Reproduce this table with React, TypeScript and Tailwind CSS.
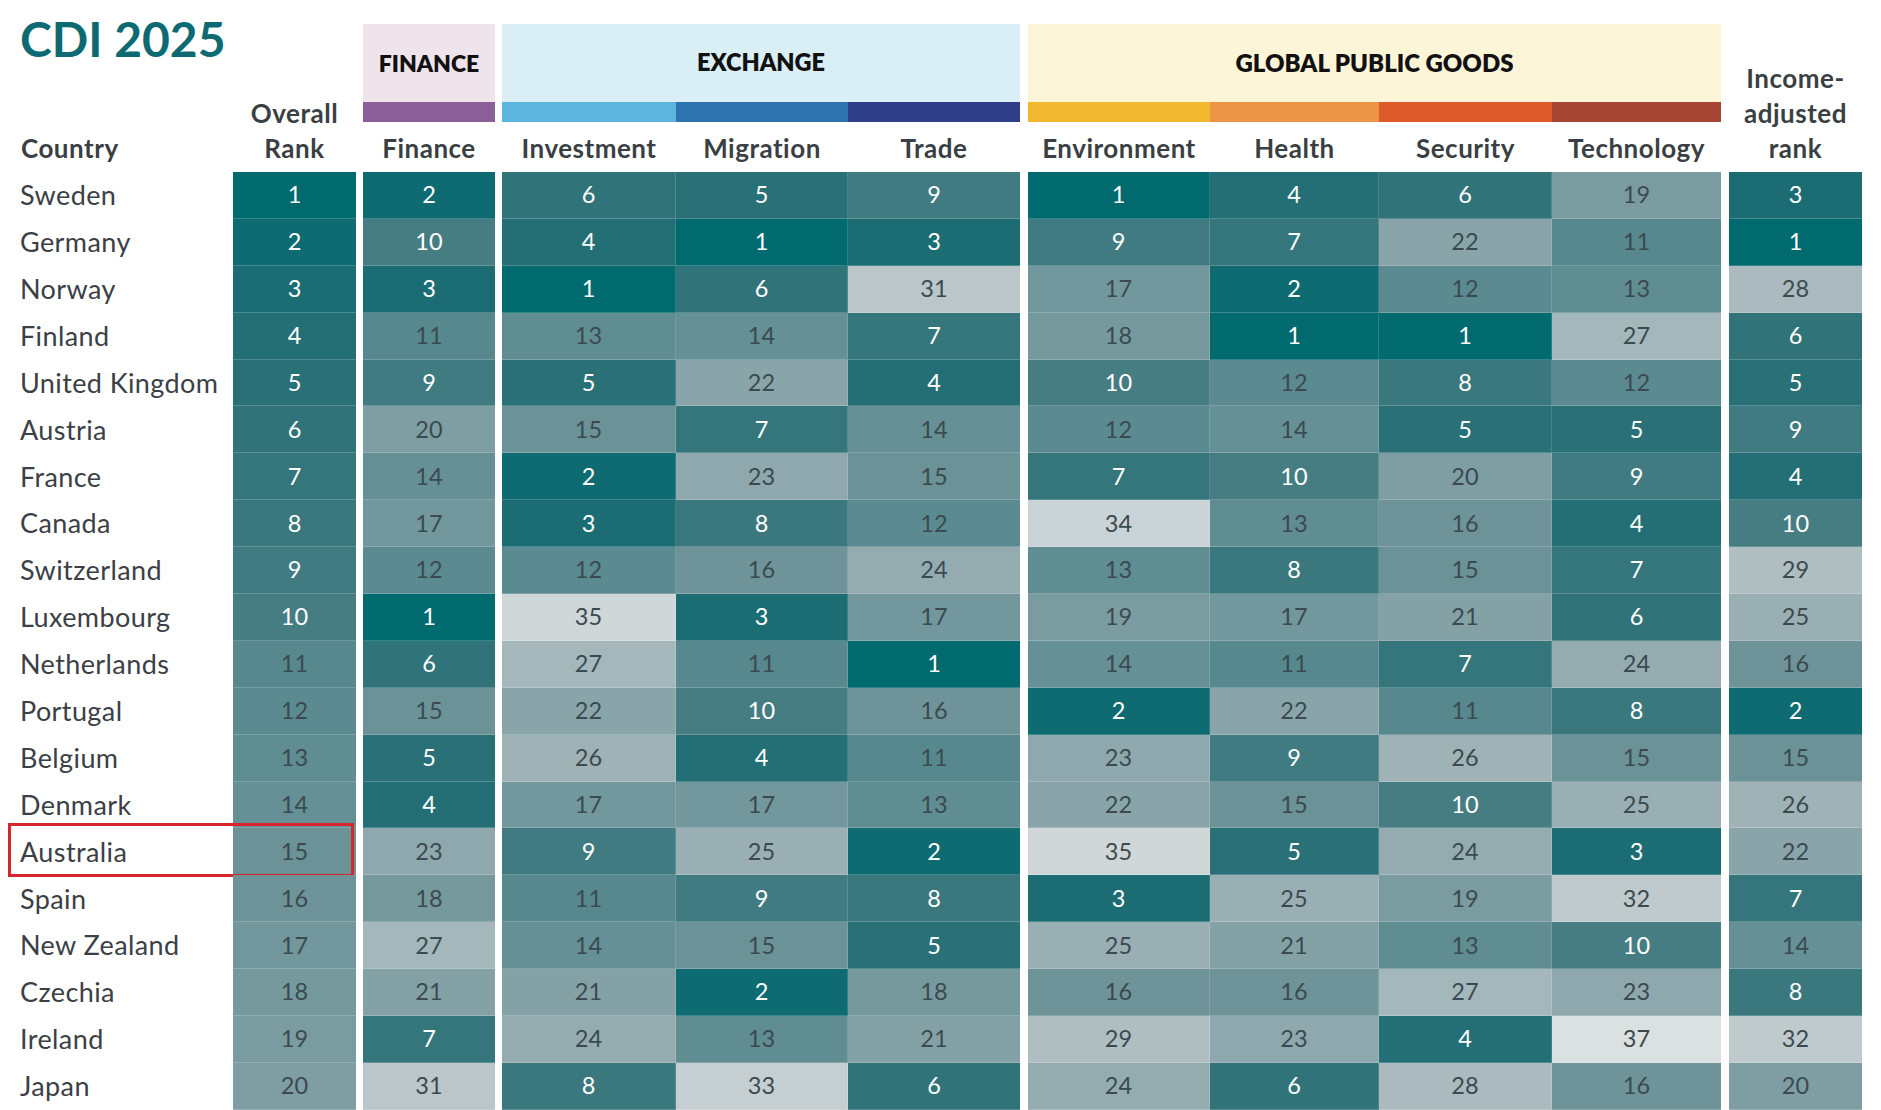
import React from "react";

type RGB = [number, number, number];
const stops: [number, RGB][] = [
  [1, [0, 106, 111]],
  [3, [28, 108, 115]],
  [5, [42, 113, 119]],
  [10, [70, 125, 131]],
  [11, [86, 136, 141]],
  [15, [106, 146, 151]],
  [20, [126, 158, 163]],
  [25, [154, 175, 179]],
  [30, [180, 194, 197]],
  [35, [208, 215, 217]],
  [38, [224, 228, 229]],
];

function colorFor(r: number): string {
  for (let i = 0; i < stops.length - 1; i++) {
    const [a, ca] = stops[i];
    const [b, cb] = stops[i + 1];
    if (r >= a && r <= b) {
      const t = (r - a) / (b - a);
      const c = ca.map((v, k) => Math.round(v + (cb[k] - v) * t));
      return `rgb(${c[0]},${c[1]},${c[2]})`;
    }
  }
  return "rgb(224,228,229)";
}

const data: [string, number[]][] = [
  ["Sweden", [1, 2, 6, 5, 9, 1, 4, 6, 19, 3]],
  ["Germany", [2, 10, 4, 1, 3, 9, 7, 22, 11, 1]],
  ["Norway", [3, 3, 1, 6, 31, 17, 2, 12, 13, 28]],
  ["Finland", [4, 11, 13, 14, 7, 18, 1, 1, 27, 6]],
  ["United Kingdom", [5, 9, 5, 22, 4, 10, 12, 8, 12, 5]],
  ["Austria", [6, 20, 15, 7, 14, 12, 14, 5, 5, 9]],
  ["France", [7, 14, 2, 23, 15, 7, 10, 20, 9, 4]],
  ["Canada", [8, 17, 3, 8, 12, 34, 13, 16, 4, 10]],
  ["Switzerland", [9, 12, 12, 16, 24, 13, 8, 15, 7, 29]],
  ["Luxembourg", [10, 1, 35, 3, 17, 19, 17, 21, 6, 25]],
  ["Netherlands", [11, 6, 27, 11, 1, 14, 11, 7, 24, 16]],
  ["Portugal", [12, 15, 22, 10, 16, 2, 22, 11, 8, 2]],
  ["Belgium", [13, 5, 26, 4, 11, 23, 9, 26, 15, 15]],
  ["Denmark", [14, 4, 17, 17, 13, 22, 15, 10, 25, 26]],
  ["Australia", [15, 23, 9, 25, 2, 35, 5, 24, 3, 22]],
  ["Spain", [16, 18, 11, 9, 8, 3, 25, 19, 32, 7]],
  ["New Zealand", [17, 27, 14, 15, 5, 25, 21, 13, 10, 14]],
  ["Czechia", [18, 21, 21, 2, 18, 16, 16, 27, 23, 8]],
  ["Ireland", [19, 7, 24, 13, 21, 29, 23, 4, 37, 32]],
  ["Japan", [20, 31, 8, 33, 6, 24, 6, 28, 16, 20]],
];

function Cell({ v, w, sep }: { v: number; w: string; sep?: boolean }) {
  return (
    <div
      className={`${w} h-full flex items-center justify-center text-[23.5px] border-b border-white/20 ${
        sep ? "border-r border-r-white/15" : ""
      } ${v <= 10 ? "text-white" : "text-[#3a4a50]"}`}
      style={{ backgroundColor: colorFor(v) }}
    >
      {v}
    </div>
  );
}

const label = "text-[26px] leading-[35px] font-bold tracking-[0.5px] text-[#3a3f44]";

export default function App() {
  return (
    <div className="w-[1881px] h-[1110px] bg-white overflow-hidden font-['Lato',sans-serif]">
      {/* Header */}
      <div className="flex h-[172px]">
        <div className="w-[233px] flex flex-col justify-between">
          <div className="pl-[20px] pt-[15px] text-[48px] leading-[48px] font-bold text-[#0d6a72]">
            CDI 2025
          </div>
          <div className={`pl-[21px] pb-[6px] ${label}`}>Country</div>
        </div>
        <div className={`w-[123px] flex flex-col justify-end items-center text-center pb-[6px] ${label}`}>
          <div>Overall</div>
          <div>Rank</div>
        </div>
        <div className="w-[7px]" />
        <div className="w-[132px] flex flex-col">
          <div className="mt-[24px] h-[78px] bg-[#efe4ec] flex items-center justify-center text-[23px] font-extrabold text-[#111]">
            FINANCE
          </div>
          <div className="h-[20px] bg-[#8a5f98]" />
          <div className={`h-[50px] flex items-end justify-center pb-[6px] ${label}`}>Finance</div>
        </div>
        <div className="w-[7px]" />
        <div className="w-[518px] flex flex-col">
          <div className="mt-[24px] h-[78px] bg-[#d9eef5] flex items-center justify-center text-[23.5px] font-extrabold text-[#111]">
            EXCHANGE
          </div>
          <div className="h-[20px] flex">
            <div className="w-[174px] bg-[#5cb5de]" />
            <div className="w-[172px] bg-[#2f74b1]" />
            <div className="w-[172px] bg-[#2f3f88]" />
          </div>
          <div className="h-[50px] flex">
            <div className={`w-[174px] flex items-end justify-center pb-[6px] ${label}`}>Investment</div>
            <div className={`w-[172px] flex items-end justify-center pb-[6px] ${label}`}>Migration</div>
            <div className={`w-[172px] flex items-end justify-center pb-[6px] ${label}`}>Trade</div>
          </div>
        </div>
        <div className="w-[8px]" />
        <div className="w-[693px] flex flex-col">
          <div className="mt-[24px] h-[78px] bg-[#fdf5d8] flex items-center justify-center text-[24px] font-extrabold text-[#111]">
            GLOBAL PUBLIC GOODS
          </div>
          <div className="h-[20px] flex">
            <div className="w-[182px] bg-[#f2b930]" />
            <div className="w-[169px] bg-[#ec9446]" />
            <div className="w-[173px] bg-[#df5a2b]" />
            <div className="w-[169px] bg-[#a74535]" />
          </div>
          <div className="h-[50px] flex">
            <div className={`w-[182px] flex items-end justify-center pb-[6px] ${label}`}>Environment</div>
            <div className={`w-[169px] flex items-end justify-center pb-[6px] ${label}`}>Health</div>
            <div className={`w-[173px] flex items-end justify-center pb-[6px] ${label}`}>Security</div>
            <div className={`w-[169px] flex items-end justify-center pb-[6px] ${label}`}>Technology</div>
          </div>
        </div>
        <div className="w-[8px]" />
        <div className={`w-[133px] flex flex-col justify-end items-center text-center pb-[6px] ${label}`}>
          <div>Income-</div>
          <div>adjusted</div>
          <div>rank</div>
        </div>
      </div>

      {/* Body */}
      <div className="flex flex-col">
        {data.map(([name, v]) => (
          <div key={name} className="relative flex h-[46.9px]">
            <div className="w-[233px] pl-[20px] flex items-center text-[27px] tracking-[0.4px] text-[#3b4046]">{name}</div>
            <Cell w="w-[123px]" v={v[0]} />
            <div className="w-[7px]" />
            <Cell w="w-[132px]" v={v[1]} />
            <div className="w-[7px]" />
            <Cell w="w-[174px]" v={v[2]} sep />
            <Cell w="w-[172px]" v={v[3]} sep />
            <Cell w="w-[172px]" v={v[4]} />
            <div className="w-[8px]" />
            <Cell w="w-[182px]" v={v[5]} sep />
            <Cell w="w-[169px]" v={v[6]} sep />
            <Cell w="w-[173px]" v={v[7]} sep />
            <Cell w="w-[169px]" v={v[8]} />
            <div className="w-[8px]" />
            <Cell w="w-[133px]" v={v[9]} />
            {name === "Australia" && (
              <div className="absolute left-[8px] top-[-5px] w-[346px] h-[54px] border-[3px] border-[#d7262b] pointer-events-none" />
            )}
          </div>
        ))}
      </div>
    </div>
  );
}
